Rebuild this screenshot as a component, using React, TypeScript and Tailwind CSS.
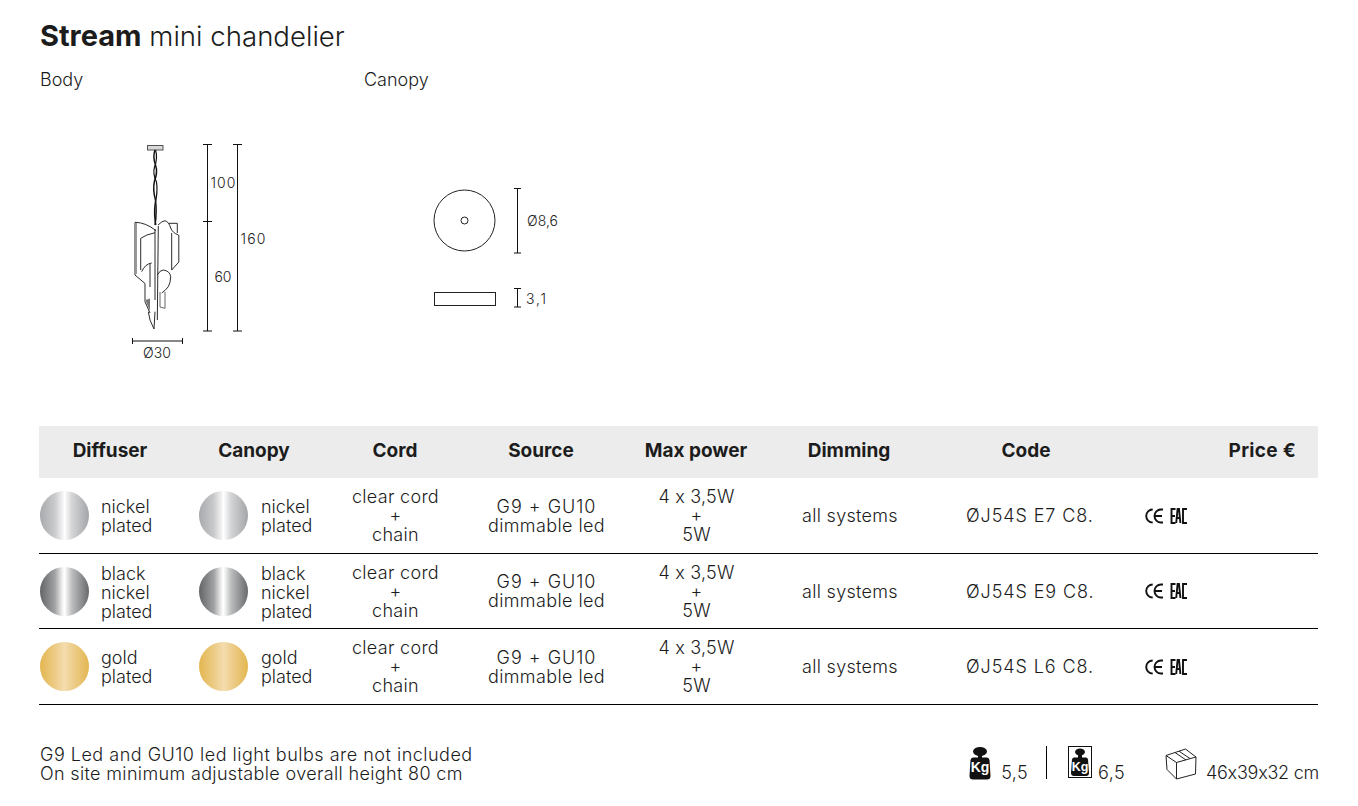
const NICKEL = "bg-[linear-gradient(90deg,#a7a9ac_0%,#c9cacc_30%,#f4f4f5_47%,#ffffff_50%,#d4d5d7_65%,#a2a4a7_100%)]";
const BLACK = "bg-[linear-gradient(90deg,#636466_0%,#a0a1a3_30%,#f2f2f2_46%,#ffffff_50%,#bdbebf_65%,#68696b_100%)]";
const GOLD = "bg-[linear-gradient(90deg,#e3b650_0%,#eccb85_30%,#f4dcae_50%,#edcd8b_68%,#e3b650_100%)]";

type Row = {
  swatch: string;
  finish: string[];
  code: string;
  height: string;
};

const ROWS: Row[] = [
  { swatch: NICKEL, finish: ["nickel", "plated"], code: "ØJ54S E7 C8.", height: "h-[76px]" },
  { swatch: BLACK, finish: ["black", "nickel", "plated"], code: "ØJ54S E9 C8.", height: "h-[75px]" },
  { swatch: GOLD, finish: ["gold", "plated"], code: "ØJ54S L6 C8.", height: "h-[76px]" },
];

function Finish({ swatch, lines, gap, width }: { swatch: string; lines: string[]; gap: string; width: string }) {
  return (
    <div className={`flex items-center ${gap} ${width}`}>
      <div className={`h-[49px] w-[49px] shrink-0 rounded-full ${swatch}`} />
      <div className={`${lines.length === 3 ? "pt-[2px]" : "pt-0"} text-[18px] leading-[19px]`}>
        {lines.map((l) => (
          <div key={l}>{l}</div>
        ))}
      </div>
    </div>
  );
}

function TableRow({ row }: { row: Row }) {
  return (
    <div className={`flex ${row.height} items-center border-b border-black pl-px text-[18px] leading-[19px]`}>
      <Finish swatch={row.swatch} lines={row.finish} gap="gap-3" width="w-[159px]" />
      <Finish swatch={row.swatch} lines={row.finish} gap="gap-[13px]" width="w-[131px]" />
      <div className="w-[131px] text-center tracking-[0.3px]">
        <div>clear cord</div>
        <div>+</div>
        <div>chain</div>
      </div>
      <div className="w-[171px] text-center">
        <div className="tracking-[1px]">G9 + GU10</div>
        <div className="tracking-[0.4px]">dimmable led</div>
      </div>
      <div className="w-[129px] text-center tracking-[0.2px]">
        <div>4 x 3,5W</div>
        <div>+</div>
        <div>5W</div>
      </div>
      <div className="w-[41px]" />
      <div className="w-[164px] tracking-[0.3px]">all systems</div>
      <div className="w-[178px] tracking-[0.9px]">{row.code}</div>
      <CeEac />
    </div>
  );
}

function CeEac() {
  return (
    <svg width="44" height="18" viewBox="0 0 44 18" fill="none" stroke="#111" strokeWidth="1.9">
      <path d="M8.7 2.5 A6.5 6.5 0 0 0 8.7 15.5" />
      <path d="M19 2.5 H17 A6.5 6.5 0 0 0 17 15.5 H19 M11 9 H18" />
      <path d="M31.5 2 H27.5 V16 H31.5 M27.5 9 H31" />
      <path d="M32.2 16 L33.6 2 H35 L36.4 16 M33 11 H35.6" />
      <path d="M43 2 H39 V16 H43" />
    </svg>
  );
}

function BodyDrawing() {
  return (
    <svg width="240" height="240" viewBox="110 130 240 240" className="ml-[71px] mt-[36px] shrink-0" fill="none">
      <g stroke="#2b2b2b" strokeWidth="1">
        <rect x="147.5" y="145.5" width="15.5" height="4.5" fill="#d8d8d8" stroke="#555" />
        {/* left panels */}
        <path d="M135 222.3 Q146 222.5 156 230.7 M135 222.3 V275 L145 283.5" />
        <path d="M136.5 223 V274" stroke="#999" />
        <path d="M140.7 238.3 Q146 234.5 155 232.7 M140.7 238.3 V270" />
        <path d="M141.7 271.7 Q145 264 151.7 263 M150 263.5 V287" />
        {/* centre strips */}
        <path d="M155 229 V300 M158.3 226 L157.3 320" />
        {/* right panels */}
        <path d="M158 225 Q162 221 165 220.7 Q169 222 170.7 228 Q172.5 233 178.5 235 M178.8 235 V262 L171.7 270 M171.7 233 V270" />
        <path d="M168.3 223.3 H177.3 V233" />
        <path d="M157.3 275 Q160 270 163.3 270 Q170 271 170.7 276.7 Q170.5 283 168.3 286.7 Q165 291 161.7 293" />
        {/* lower strips */}
        <path d="M145 283.5 V301.7 L150 313 M148.3 311.7 L150 320 L154 329 L155 311.7" />
        <path d="M160 292 V307 L165 308.3 V292" stroke="#666" />
        <path d="M145.5 285 V300" stroke="#999" />
      </g>
      <path d="M145.5 300 L150 298.5 V311 L146.5 303 Z" fill="#777" />
      {/* chain */}
      <path d="M155 150 Q152.5 157 155.5 165 Q158 172 154.5 181 Q152.5 190 155.5 200 Q157 212 155 225" stroke="#111" strokeWidth="1.5" />
      <path d="M155.5 150 Q158 158 154.5 167 Q152.5 174 156.5 182 Q158 192 155 204 Q153.5 215 156 225" stroke="#111" strokeWidth="1.2" />
      <g stroke="#111" strokeWidth="1">
        <path d="M207.5 144 V331 M203 144.5 H212 M203 221.5 H212 M203 331 H212" />
        <path d="M237.5 144 V331 M233 144.5 H242 M233 331 H242" />
        <path d="M132.5 338 V344 M182.5 338 V344 M132 341 H183" />
      </g>
      <g fill="#222" fontFamily="Inter, sans-serif" fontSize="14" fontWeight="300">
        <text x="210.5" y="188" textLength="25">100</text>
        <text x="240.5" y="244" textLength="25">160</text>
        <text x="214.5" y="282" textLength="17">60</text>
        <text x="143" y="358" textLength="28">Ø30</text>
      </g>
    </svg>
  );
}

function CanopyDrawing() {
  return (
    <svg width="200" height="240" viewBox="400 130 200 240" className="ml-[50px] mt-[36px] shrink-0" fill="none">
      <g stroke="#222" strokeWidth="1">
        <circle cx="464.5" cy="220.5" r="30.5" />
        <circle cx="464.5" cy="220.5" r="3.5" />
        <rect x="434.5" y="292.5" width="61" height="13" />
      </g>
      <g stroke="#111" strokeWidth="1">
        <path d="M517.5 188 V253 M514 188.5 H521 M514 253 H521" />
        <path d="M517.5 288 V307 M514 288.5 H521 M514 307 H521" />
      </g>
      <g fill="#222" fontFamily="Inter, sans-serif" fontSize="14" fontWeight="300">
        <text x="527" y="226" textLength="31">Ø8,6</text>
        <text x="526" y="304" textLength="20">3,1</text>
      </g>
    </svg>
  );
}

function Weight() {
  return (
    <svg width="22" height="34" viewBox="0 0 22 34" className="mb-[3px] shrink-0">
      <ellipse cx="11" cy="5.5" rx="7" ry="4.5" fill="#111" />
      <rect x="9" y="8" width="4" height="5" fill="#111" />
      <path d="M4 11.5 H18 Q20 11.5 20.5 14 L21.5 30 Q21.5 33.5 18 33.5 H4 Q0.5 33.5 0.5 30 L1.5 14 Q2 11.5 4 11.5 Z" fill="#111" />
      <text x="11" y="26" textAnchor="middle" fill="#fff" fontFamily="Liberation Sans, sans-serif" fontWeight="700" fontSize="14">
        Kg
      </text>
    </svg>
  );
}

function WeightBoxed() {
  return (
    <svg width="24" height="32" viewBox="0 0 24 32" className="mb-[5px] shrink-0">
      <rect x="0.5" y="0.5" width="23" height="31" fill="none" stroke="#111" strokeWidth="1" />
      <ellipse cx="12" cy="6" rx="5" ry="3.5" fill="#111" />
      <rect x="10" y="8" width="4" height="5" fill="#111" />
      <path d="M6 11.5 H18 Q19.5 11.5 20 13.5 L21 27 Q21 30 18 30 H6 Q3 30 3 27 L4 13.5 Q4.5 11.5 6 11.5 Z" fill="#111" />
      <text x="12" y="24.5" textAnchor="middle" fill="#fff" fontFamily="Liberation Sans, sans-serif" fontWeight="700" fontSize="12.5">
        Kg
      </text>
    </svg>
  );
}

function BoxIcon() {
  return (
    <svg width="32" height="32" viewBox="0 0 32 32" fill="none" stroke="#222" strokeWidth="1" className="shrink-0">
      <path d="M1 7.5 L20.5 1 L31 9 L11.5 14.5 Z" />
      <path d="M1 7.5 L2 21.5 L11.5 31 L30.5 26 L31 9 M11.5 14.5 V31" />
      <path d="M10 4.5 L21 12 M14 3.2 L25 10.5" />
    </svg>
  );
}

export default function App() {
  return (
    <div className="h-[806px] w-[1358px] overflow-hidden bg-white pl-[39px] pr-[40px] font-['Inter',sans-serif] font-light text-[#1c1c1c] [font-feature-settings:'calt'_0]">
      <h1 className="h-[70px] pt-[17px] pl-px text-[27.6px] leading-[38px] font-light">
        <span className="text-[29px] font-bold">Stream</span> mini chandelier
      </h1>
      <div className="flex h-[24px] pl-px text-[18px] leading-[20px]">
        <div className="w-[324px]">Body</div>
        <div>Canopy</div>
      </div>
      <div className="flex h-[332px]">
        <BodyDrawing />
        <CanopyDrawing />
      </div>

      <div className="flex h-[52px] items-center bg-[#ececec] pb-[2px] text-[19px] font-bold text-[#1c1c1c]">
        <div className="w-[142px] text-center">Diffuser</div>
        <div className="w-[146px] text-center">Canopy</div>
        <div className="w-[136px] text-center">Cord</div>
        <div className="w-[156px] text-center">Source</div>
        <div className="w-[154px] text-center">Max power</div>
        <div className="w-[152px] text-center">Dimming</div>
        <div className="w-[202px] text-center">Code</div>
        <div className="flex-1 pr-[22px] text-right tracking-[0.3px]">Price €</div>
      </div>
      {ROWS.map((row) => (
        <TableRow key={row.code} row={row} />
      ))}

      <div className="mt-[40px] -mr-px flex items-end justify-between pl-px text-[18px] leading-[19px]">
        <div>
          <div className="tracking-[0.5px]">G9 Led and GU10 led light bulbs are not included</div>
          <div className="tracking-[0.35px]">On site minimum adjustable overall height 80 cm</div>
        </div>
        <div className="flex items-end">
          <Weight />
          <span className="mb-px ml-[10px] tracking-[0.4px]">5,5</span>
          <div className="mb-[4px] ml-[18px] mr-[21px] h-[33px] w-px bg-black" />
          <WeightBoxed />
          <span className="mb-px ml-[6px] tracking-[0.4px]">6,5</span>
          <div className="mb-[3px] ml-[40px]"><BoxIcon /></div>
          <span className="mb-px ml-[9px] whitespace-nowrap tracking-[-0.25px]">46x39x32 cm</span>
        </div>
      </div>
    </div>
  );
}
